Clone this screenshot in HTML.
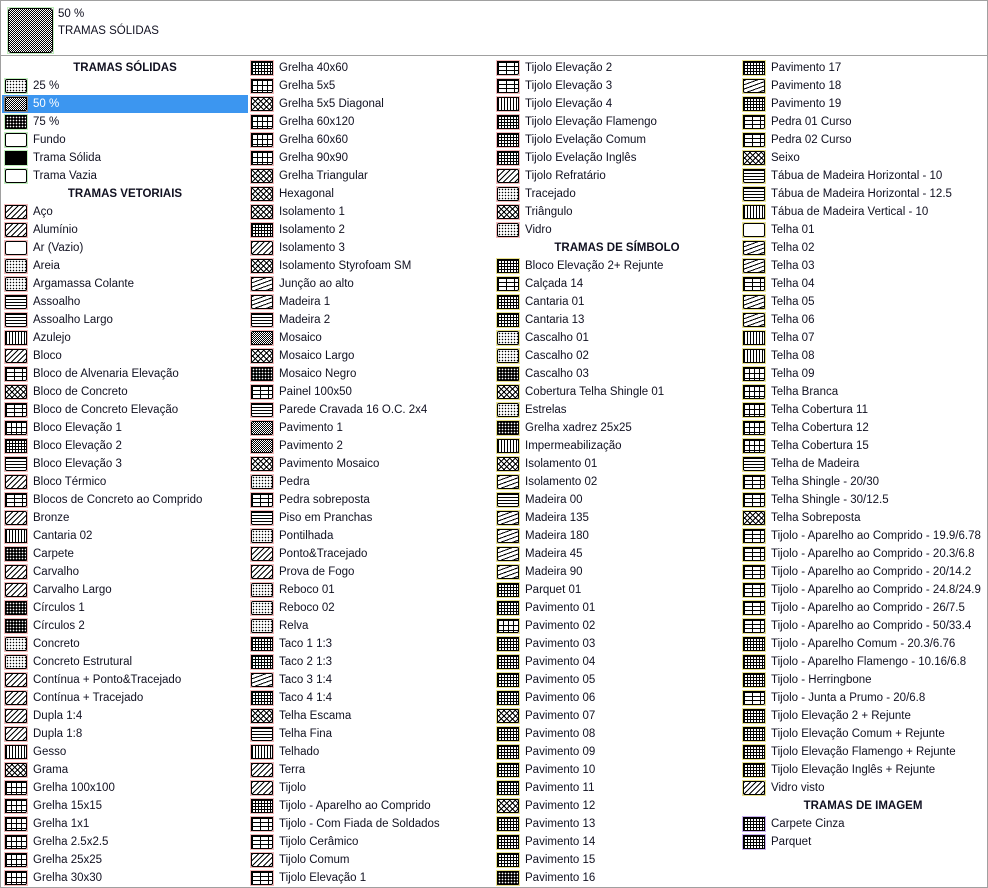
<!DOCTYPE html>
<html><head><meta charset="utf-8"><style>
*{margin:0;padding:0;box-sizing:border-box}
body{width:988px;height:888px;background:#fff;font-family:"Liberation Sans","DejaVu Sans",sans-serif;font-size:11.5px;color:#101020;overflow:hidden;position:relative}
#frame{position:absolute;left:0;top:0;width:988px;height:888px;border:1px solid #a0a0a0}
#top{position:absolute;left:1px;top:1px;width:986px;height:55px;border-bottom:1px solid #a0a0a0}
#big{position:absolute;left:7px;top:7px;width:47px;height:47px;border:1px solid #bfeebb;}
#big b{display:block;width:100%;height:100%;border:1px solid #000;border-radius:3px;background:repeating-conic-gradient(#000 0 25%,#fff 0 50%) 0 0/2px 2px}
.t1{position:absolute;left:58px;top:8px}
.t2{position:absolute;left:58px;top:25px}
.col{position:absolute;top:59px;width:246px}
.r{height:18px;line-height:18px;position:relative;padding-left:31px;white-space:nowrap}
.h{height:18px;line-height:18px;text-align:center;font-weight:bold}
.sel{background:#3c96f0;color:#fff}
.r i{position:absolute;left:2px;top:1px;width:24px;height:16px;border:1px solid #f4b8b8;display:block}
.r i:after{content:"";position:absolute;left:0;top:0;right:0;bottom:0;border:1px solid #000;border-radius:2px;background:inherit}
.G i{border-color:#bfeebb}.Y i{border-color:#e8e08a}.P i{border-color:#c8aef0}
i{background:#fff}
.d{background:repeating-linear-gradient(135deg,#000 0 1px,#fff 1px 4px)!important}
.x{background:repeating-linear-gradient(135deg,#000 0 1px,transparent 1px 4px),repeating-linear-gradient(45deg,#000 0 1px,#fff 1px 4px)!important}
.g{background:linear-gradient(90deg,#000 1px,transparent 1px) 0 0/5px 5px,linear-gradient(#000 1px,#fff 1px) 0 0/5px 5px!important}
.h2{background:repeating-linear-gradient(#000 0 1px,#fff 1px 3px)!important}
.v{background:repeating-linear-gradient(90deg,#000 0 1px,#fff 1px 3px)!important}
.b{background:linear-gradient(#000 1px,transparent 1px) 0 0/8px 4px,linear-gradient(90deg,#000 1px,#fff 1px) 0 0/8px 8px!important}
.s{background:radial-gradient(#000 0.6px,#fff 0.9px) 0 0/3px 3px!important}
.k{background:repeating-conic-gradient(#000 0 25%,#fff 0 50%) 0 0/2px 2px!important}
.kk{background:radial-gradient(#fff 0.6px,#000 1px) 0 0/3px 3px!important}
.bl{background:#000!important}
.w{background:repeating-linear-gradient(160deg,#000 0 1px,#fff 1px 4px)!important}
.f{background:linear-gradient(90deg,#000 1px,transparent 1px) 0 0/3px 3px,linear-gradient(#000 1px,#fff 1px) 0 0/3px 3px!important}
</style></head><body>
<div id="frame"></div>
<div id="top"></div>
<div id="big"><b></b></div>
<div class="t1">50 %</div><div class="t2">TRAMAS SÓLIDAS</div>

<div class="col" style="left:2px">
<div class="h">TRAMAS SÓLIDAS</div>
<div class="r G"><i class="s"></i>25 %</div>
<div class="r G sel"><i class="k" style="border-color:#888"></i>50 %</div>
<div class="r G"><i class="kk"></i>75 %</div>
<div class="r G"><i></i>Fundo</div>
<div class="r G"><i class="bl"></i>Trama Sólida</div>
<div class="r G"><i></i>Trama Vazia</div>
<div class="h">TRAMAS VETORIAIS</div>
<div class="r"><i class="d"></i>Aço</div>
<div class="r"><i class="d"></i>Alumínio</div>
<div class="r"><i></i>Ar (Vazio)</div>
<div class="r"><i class="s"></i>Areia</div>
<div class="r"><i class="s"></i>Argamassa Colante</div>
<div class="r"><i class="h2"></i>Assoalho</div>
<div class="r"><i class="h2"></i>Assoalho Largo</div>
<div class="r"><i class="v"></i>Azulejo</div>
<div class="r"><i class="d"></i>Bloco</div>
<div class="r"><i class="b"></i>Bloco de Alvenaria Elevação</div>
<div class="r"><i class="x"></i>Bloco de Concreto</div>
<div class="r"><i class="b"></i>Bloco de Concreto Elevação</div>
<div class="r"><i class="g"></i>Bloco Elevação 1</div>
<div class="r"><i class="f"></i>Bloco Elevação 2</div>
<div class="r"><i class="h2"></i>Bloco Elevação 3</div>
<div class="r"><i class="d"></i>Bloco Térmico</div>
<div class="r"><i class="b"></i>Blocos de Concreto ao Comprido</div>
<div class="r"><i class="d"></i>Bronze</div>
<div class="r"><i class="v"></i>Cantaria 02</div>
<div class="r"><i class="kk"></i>Carpete</div>
<div class="r"><i class="d"></i>Carvalho</div>
<div class="r"><i class="d"></i>Carvalho Largo</div>
<div class="r"><i class="kk"></i>Círculos 1</div>
<div class="r"><i class="kk"></i>Círculos 2</div>
<div class="r"><i class="s"></i>Concreto</div>
<div class="r"><i class="s"></i>Concreto Estrutural</div>
<div class="r"><i class="d"></i>Contínua + Ponto&amp;Tracejado</div>
<div class="r"><i class="d"></i>Contínua + Tracejado</div>
<div class="r"><i class="d"></i>Dupla 1:4</div>
<div class="r"><i class="d"></i>Dupla 1:8</div>
<div class="r"><i class="v"></i>Gesso</div>
<div class="r"><i class="x"></i>Grama</div>
<div class="r"><i class="g"></i>Grelha 100x100</div>
<div class="r"><i class="g"></i>Grelha 15x15</div>
<div class="r"><i class="g"></i>Grelha 1x1</div>
<div class="r"><i class="g"></i>Grelha 2.5x2.5</div>
<div class="r"><i class="g"></i>Grelha 25x25</div>
<div class="r"><i class="g"></i>Grelha 30x30</div>
</div>

<div class="col" style="left:248px">
<div class="r"><i class="f"></i>Grelha 40x60</div>
<div class="r"><i class="g"></i>Grelha 5x5</div>
<div class="r"><i class="x"></i>Grelha 5x5 Diagonal</div>
<div class="r"><i class="g"></i>Grelha 60x120</div>
<div class="r"><i class="g"></i>Grelha 60x60</div>
<div class="r"><i class="g"></i>Grelha 90x90</div>
<div class="r"><i class="x"></i>Grelha Triangular</div>
<div class="r"><i class="x"></i>Hexagonal</div>
<div class="r"><i class="x"></i>Isolamento 1</div>
<div class="r"><i class="f"></i>Isolamento 2</div>
<div class="r"><i class="d"></i>Isolamento 3</div>
<div class="r"><i class="x"></i>Isolamento Styrofoam SM</div>
<div class="r"><i class="w"></i>Junção ao alto</div>
<div class="r"><i class="w"></i>Madeira 1</div>
<div class="r"><i class="h2"></i>Madeira 2</div>
<div class="r"><i class="k"></i>Mosaico</div>
<div class="r"><i class="x"></i>Mosaico Largo</div>
<div class="r"><i class="kk"></i>Mosaico Negro</div>
<div class="r"><i class="b"></i>Painel 100x50</div>
<div class="r"><i class="h2"></i>Parede Cravada 16 O.C. 2x4</div>
<div class="r"><i class="k"></i>Pavimento 1</div>
<div class="r"><i class="k"></i>Pavimento 2</div>
<div class="r"><i class="x"></i>Pavimento Mosaico</div>
<div class="r"><i class="s"></i>Pedra</div>
<div class="r"><i class="b"></i>Pedra sobreposta</div>
<div class="r"><i class="h2"></i>Piso em Pranchas</div>
<div class="r"><i class="s"></i>Pontilhada</div>
<div class="r"><i class="d"></i>Ponto&amp;Tracejado</div>
<div class="r"><i class="d"></i>Prova de Fogo</div>
<div class="r"><i class="s"></i>Reboco 01</div>
<div class="r"><i class="s"></i>Reboco 02</div>
<div class="r"><i class="s"></i>Relva</div>
<div class="r"><i class="f"></i>Taco 1 1:3</div>
<div class="r"><i class="f"></i>Taco 2 1:3</div>
<div class="r"><i class="w"></i>Taco 3 1:4</div>
<div class="r"><i class="f"></i>Taco 4 1:4</div>
<div class="r"><i class="x"></i>Telha Escama</div>
<div class="r"><i class="h2"></i>Telha Fina</div>
<div class="r"><i class="v"></i>Telhado</div>
<div class="r"><i class="d"></i>Terra</div>
<div class="r"><i class="d"></i>Tijolo</div>
<div class="r"><i class="f"></i>Tijolo - Aparelho ao Comprido</div>
<div class="r"><i class="b"></i>Tijolo - Com Fiada de Soldados</div>
<div class="r"><i class="b"></i>Tijolo Cerâmico</div>
<div class="r"><i class="d"></i>Tijolo Comum</div>
<div class="r"><i class="b"></i>Tijolo Elevação 1</div>
</div>

<div class="col" style="left:494px">
<div class="r"><i class="b"></i>Tijolo Elevação 2</div>
<div class="r"><i class="b"></i>Tijolo Elevação 3</div>
<div class="r"><i class="v"></i>Tijolo Elevação 4</div>
<div class="r"><i class="f"></i>Tijolo Elevação Flamengo</div>
<div class="r"><i class="f"></i>Tijolo Evelação Comum</div>
<div class="r"><i class="f"></i>Tijolo Evelação Inglês</div>
<div class="r"><i class="d"></i>Tijolo Refratário</div>
<div class="r"><i class="s"></i>Tracejado</div>
<div class="r"><i class="x"></i>Triângulo</div>
<div class="r"><i class="s"></i>Vidro</div>
<div class="h">TRAMAS DE SÍMBOLO</div>
<div class="r Y"><i class="f"></i>Bloco Elevação 2+ Rejunte</div>
<div class="r Y"><i class="b"></i>Calçada 14</div>
<div class="r Y"><i class="f"></i>Cantaria 01</div>
<div class="r Y"><i class="f"></i>Cantaria 13</div>
<div class="r Y"><i class="s"></i>Cascalho 01</div>
<div class="r Y"><i class="s"></i>Cascalho 02</div>
<div class="r Y"><i class="kk"></i>Cascalho 03</div>
<div class="r Y"><i class="x"></i>Cobertura Telha Shingle 01</div>
<div class="r Y"><i class="s"></i>Estrelas</div>
<div class="r Y"><i class="kk"></i>Grelha xadrez 25x25</div>
<div class="r Y"><i class="v"></i>Impermeabilização</div>
<div class="r Y"><i class="x"></i>Isolamento 01</div>
<div class="r Y"><i class="w"></i>Isolamento 02</div>
<div class="r Y"><i class="h2"></i>Madeira 00</div>
<div class="r Y"><i class="w"></i>Madeira 135</div>
<div class="r Y"><i class="w"></i>Madeira 180</div>
<div class="r Y"><i class="w"></i>Madeira 45</div>
<div class="r Y"><i class="w"></i>Madeira 90</div>
<div class="r Y"><i class="f"></i>Parquet 01</div>
<div class="r Y"><i class="f"></i>Pavimento 01</div>
<div class="r Y"><i class="g"></i>Pavimento 02</div>
<div class="r Y"><i class="f"></i>Pavimento 03</div>
<div class="r Y"><i class="f"></i>Pavimento 04</div>
<div class="r Y"><i class="f"></i>Pavimento 05</div>
<div class="r Y"><i class="f"></i>Pavimento 06</div>
<div class="r Y"><i class="x"></i>Pavimento 07</div>
<div class="r Y"><i class="f"></i>Pavimento 08</div>
<div class="r Y"><i class="f"></i>Pavimento 09</div>
<div class="r Y"><i class="f"></i>Pavimento 10</div>
<div class="r Y"><i class="f"></i>Pavimento 11</div>
<div class="r Y"><i class="x"></i>Pavimento 12</div>
<div class="r Y"><i class="f"></i>Pavimento 13</div>
<div class="r Y"><i class="f"></i>Pavimento 14</div>
<div class="r Y"><i class="f"></i>Pavimento 15</div>
<div class="r Y"><i class="kk"></i>Pavimento 16</div>
</div>

<div class="col" style="left:740px">
<div class="r Y"><i class="f"></i>Pavimento 17</div>
<div class="r Y"><i class="w"></i>Pavimento 18</div>
<div class="r Y"><i class="f"></i>Pavimento 19</div>
<div class="r Y"><i class="b"></i>Pedra 01 Curso</div>
<div class="r Y"><i class="b"></i>Pedra 02 Curso</div>
<div class="r Y"><i class="x"></i>Seixo</div>
<div class="r Y"><i class="h2"></i>Tábua de Madeira Horizontal - 10</div>
<div class="r Y"><i class="h2"></i>Tábua de Madeira Horizontal - 12.5</div>
<div class="r Y"><i class="v"></i>Tábua de Madeira Vertical - 10</div>
<div class="r Y"><i></i>Telha 01</div>
<div class="r Y"><i class="w"></i>Telha 02</div>
<div class="r Y"><i class="w"></i>Telha 03</div>
<div class="r Y"><i class="b"></i>Telha 04</div>
<div class="r Y"><i class="w"></i>Telha 05</div>
<div class="r Y"><i class="w"></i>Telha 06</div>
<div class="r Y"><i class="v"></i>Telha 07</div>
<div class="r Y"><i class="v"></i>Telha 08</div>
<div class="r Y"><i class="g"></i>Telha 09</div>
<div class="r Y"><i class="g"></i>Telha Branca</div>
<div class="r Y"><i class="g"></i>Telha Cobertura 11</div>
<div class="r Y"><i class="g"></i>Telha Cobertura 12</div>
<div class="r Y"><i class="g"></i>Telha Cobertura 15</div>
<div class="r Y"><i class="h2"></i>Telha de Madeira</div>
<div class="r Y"><i class="b"></i>Telha Shingle - 20/30</div>
<div class="r Y"><i class="b"></i>Telha Shingle - 30/12.5</div>
<div class="r Y"><i class="x"></i>Telha Sobreposta</div>
<div class="r Y"><i class="b"></i>Tijolo - Aparelho ao Comprido - 19.9/6.78</div>
<div class="r Y"><i class="b"></i>Tijolo - Aparelho ao Comprido - 20.3/6.8</div>
<div class="r Y"><i class="b"></i>Tijolo - Aparelho ao Comprido - 20/14.2</div>
<div class="r Y"><i class="b"></i>Tijolo - Aparelho ao Comprido - 24.8/24.9</div>
<div class="r Y"><i class="b"></i>Tijolo - Aparelho ao Comprido - 26/7.5</div>
<div class="r Y"><i class="b"></i>Tijolo - Aparelho ao Comprido - 50/33.4</div>
<div class="r Y"><i class="f"></i>Tijolo - Aparelho Comum - 20.3/6.76</div>
<div class="r Y"><i class="f"></i>Tijolo - Aparelho Flamengo - 10.16/6.8</div>
<div class="r Y"><i class="f"></i>Tijolo - Herringbone</div>
<div class="r Y"><i class="b"></i>Tijolo - Junta a Prumo - 20/6.8</div>
<div class="r Y"><i class="f"></i>Tijolo Elevação 2 + Rejunte</div>
<div class="r Y"><i class="f"></i>Tijolo Elevação Comum + Rejunte</div>
<div class="r Y"><i class="f"></i>Tijolo Elevação Flamengo + Rejunte</div>
<div class="r Y"><i class="f"></i>Tijolo Elevação Inglês + Rejunte</div>
<div class="r Y"><i class="d"></i>Vidro visto</div>
<div class="h">TRAMAS DE IMAGEM</div>
<div class="r P"><i class="f"></i>Carpete Cinza</div>
<div class="r P"><i class="f"></i>Parquet</div>
</div>
</body></html>
